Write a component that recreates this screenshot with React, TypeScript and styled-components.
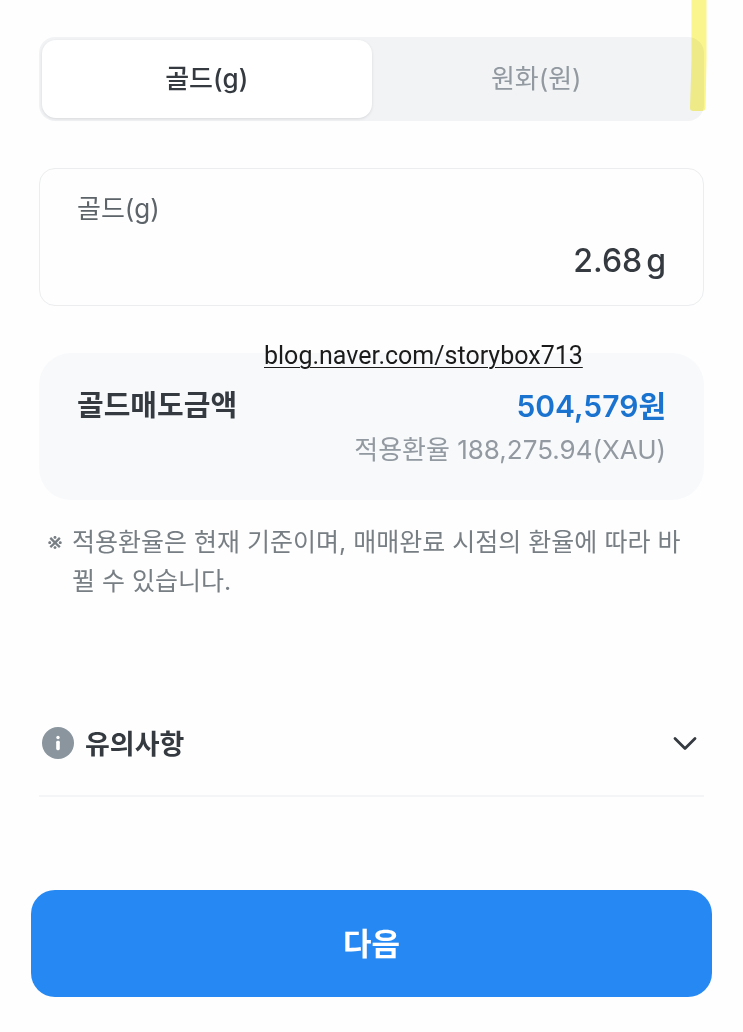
import { useState } from "react";
import styled, { createGlobalStyle } from "styled-components";

const GlobalStyle = createGlobalStyle`
  *, *::before, *::after { box-sizing: border-box; }
  body {
    margin: 0;
    background: #fefefe;
    color: #343a40;
    font-family: Inter, "Noto Sans CJK KR", sans-serif;
  }
  button, input {
    margin: 0;
    padding: 0;
    border: 0;
    background: none;
    color: inherit;
    font: inherit;
  }
  button { cursor: pointer; }
`;

const Page = styled.div`
  position: relative;
  padding: 37px 31px 35px;
`;

const Content = styled.main`
  padding: 0 8px;
`;

const Tabs = styled.div`
  display: grid;
  grid-template-columns: 1fr 1fr;
  height: 84px;
  padding: 3px;
  border-radius: 16px;
  background: #f1f3f5;
`;

const Tab = styled.button<{ $active: boolean }>`
  padding-bottom: 5px;
  border-radius: 14px;
  background: ${(p) => (p.$active ? "#ffffff" : "transparent")};
  box-shadow: ${(p) => (p.$active ? "0 1px 3px rgba(33, 37, 41, 0.12)" : "none")};
  color: ${(p) => (p.$active ? "#343a40" : "#9299a0")};
  font-size: 26px;
  font-weight: ${(p) => (p.$active ? 500 : 400)};
`;

const Field = styled.label`
  display: flex;
  flex-direction: column;
  gap: 10px;
  margin-top: 47px;
  padding: 20px 37px 22px;
  border: 1px solid #ebedef;
  border-radius: 16px;
`;

const FieldLabel = styled.span`
  color: #5c6369;
  font-size: 26px;
  line-height: 40px;
`;

const FieldValue = styled.span`
  display: flex;
  align-items: center;
  gap: 4px;
  font-size: 32px;
  font-weight: 500;
  line-height: 44px;
`;

const AmountInput = styled.input`
  flex: 1;
  min-width: 0;
  height: 44px;
  text-align: right;
  outline: none;
`;

const Summary = styled.section`
  position: relative;
  margin-top: 47px;
  padding: 31px 38px 29px;
  border-radius: 32px;
  background: #f7f9fb;
`;

const BlogLink = styled.a`
  position: absolute;
  top: -13px;
  left: 225px;
  color: #1b1b1b;
  font-family: Roboto, sans-serif;
  font-size: 25px;
  line-height: 32px;
  text-decoration-thickness: 1px;
  text-underline-offset: 3px;
`;

const SummaryRow = styled.div`
  display: flex;
  align-items: center;
  justify-content: space-between;
  line-height: 44px;
`;

const SummaryTitle = styled.h2`
  margin: 0;
  font-size: 29px;
  font-weight: 700;
`;

const SummaryAmount = styled.strong`
  color: #1b73d0;
  font-size: 30px;
  font-weight: 600;
`;

const Rate = styled.p`
  margin: 0;
  color: #9299a0;
  font-size: 26px;
  line-height: 43px;
  text-align: right;
`;

const Note = styled.p`
  display: flex;
  margin: 23px 8px 0;
  color: #777e84;
  font-size: 25px;
  line-height: 39px;
  word-break: break-all;
`;

const NoteMark = styled.span`
  flex: none;
  width: 25px;
`;

const Notice = styled.button`
  display: flex;
  align-items: center;
  width: 100%;
  height: 107px;
  margin-top: 89px;
  padding: 0 4px 0 3px;
  border-bottom: 2px solid #f4f5f6;
  font-size: 27px;
  font-weight: 700;
  text-align: left;
`;

const NoticeTitle = styled.span`
  flex: 1;
  margin-left: 11px;
`;

const NextButton = styled.button`
  width: 100%;
  height: 107px;
  margin-top: 93px;
  padding-bottom: 4px;
  border-radius: 24px;
  background: #2689f3;
  color: #ffffff;
  font-size: 31px;
  font-weight: 600;
`;

const Highlighter = styled.svg`
  position: absolute;
  top: 0;
  right: 36px;
  mix-blend-mode: multiply;
  pointer-events: none;
`;

const InfoIcon = () => (
  <svg width="32" height="32" viewBox="0 0 32 32" aria-hidden="true">
    <circle cx="16" cy="16" r="16" fill="#8b959e" />
    <circle cx="16" cy="10.5" r="1.7" fill="#fff" />
    <rect x="14.2" y="13.8" width="3.6" height="9.4" rx="1.4" fill="#fff" />
  </svg>
);

const ChevronIcon = () => (
  <svg width="30" height="30" viewBox="0 0 30 30" fill="none" aria-hidden="true">
    <path
      d="M5 10.5 L15 20.5 L25 10.5"
      stroke="#343a40"
      strokeWidth="2.8"
      strokeLinecap="round"
      strokeLinejoin="round"
    />
  </svg>
);

export default function App() {
  const [unit, setUnit] = useState("gold");
  const [amount, setAmount] = useState("2.68");
  const [open, setOpen] = useState(false);

  return (
    <>
      <GlobalStyle />
      <Page>
        <Content>
          <Tabs role="tablist">
            <Tab role="tab" aria-selected={unit === "gold"} $active={unit === "gold"} onClick={() => setUnit("gold")}>
              골드(g)
            </Tab>
            <Tab role="tab" aria-selected={unit === "won"} $active={unit === "won"} onClick={() => setUnit("won")}>
              원화(원)
            </Tab>
          </Tabs>

          <Field>
            <FieldLabel>골드(g)</FieldLabel>
            <FieldValue>
              <AmountInput inputMode="decimal" value={amount} onChange={(e) => setAmount(e.target.value)} />
              <span>g</span>
            </FieldValue>
          </Field>

          <Summary>
            <BlogLink href="https://blog.naver.com/storybox713">blog.naver.com/storybox713</BlogLink>
            <SummaryRow>
              <SummaryTitle>골드매도금액</SummaryTitle>
              <SummaryAmount>504,579원</SummaryAmount>
            </SummaryRow>
            <Rate>적용환율 188,275.94(XAU)</Rate>
          </Summary>

          <Note>
            <NoteMark>※</NoteMark>
            <span>적용환율은 현재 기준이며, 매매완료 시점의 환율에 따라 바뀔 수 있습니다.</span>
          </Note>

          <Notice aria-expanded={open} onClick={() => setOpen(!open)}>
            <InfoIcon />
            <NoticeTitle>유의사항</NoticeTitle>
            <ChevronIcon />
          </Notice>
        </Content>

        <NextButton>다음</NextButton>

        <Highlighter width="17" height="111" viewBox="0 0 17 111" aria-hidden="true">
          <path d="M1.5 0 H16.5 V60 L15.5 108 Q15 111 12 111 H3 Q0 111 0 108 L1.5 60 Z" fill="#fcf68e" />
        </Highlighter>
      </Page>
    </>
  );
}
